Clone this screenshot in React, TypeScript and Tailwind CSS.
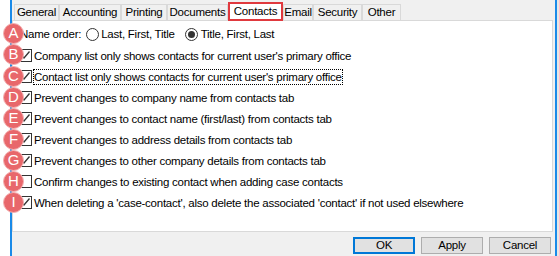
import React from "react";

const tabs = [
  { label: "General", w: "w-[45px]" },
  { label: "Accounting", w: "w-[62px]" },
  { label: "Printing", w: "w-[46px]" },
  { label: "Documents", w: "w-[61px]" },
  { label: "Contacts", w: "w-[55px]", active: true },
  { label: "Email", w: "w-[30px]" },
  { label: "Security", w: "w-[49px]" },
  { label: "Other", w: "w-[39px]" },
];

const options = [
  { text: "Company list only shows contacts for current user's primary office", checked: true },
  { text: "Contact list only shows contacts for current user's primary office", checked: true, focus: true },
  { text: "Prevent changes to company name from contacts tab", checked: true },
  { text: "Prevent changes to contact name (first/last) from contacts tab", checked: true },
  { text: "Prevent changes to address details from contacts tab", checked: true },
  { text: "Prevent changes to other company details from contacts tab", checked: true },
  { text: "Confirm changes to existing contact when adding case contacts", checked: false },
  { text: "When deleting a 'case-contact', also delete the associated 'contact' if not used elsewhere", checked: true },
];

const markers = [
  { letter: "A", top: "top-[23px]" },
  { letter: "B", top: "top-[44px]" },
  { letter: "C", top: "top-[66px]" },
  { letter: "D", top: "top-[87px]" },
  { letter: "E", top: "top-[108px]" },
  { letter: "F", top: "top-[129px]" },
  { letter: "G", top: "top-[150px]" },
  { letter: "H", top: "top-[171px]" },
  { letter: "I", top: "top-[192px]" },
];

function Checkbox({ checked }: { checked: boolean }) {
  return (
    <span className="w-[13px] h-[13px] shrink-0 border border-[#333333] bg-white flex items-center justify-center">
      {checked && (
        <svg width="11" height="11" viewBox="0 0 11 11">
          <path d="M1.5 5.5 L4 8 L9.5 1.5" fill="none" stroke="#333333" strokeWidth="1.3" />
        </svg>
      )}
    </span>
  );
}

function Radio({ checked }: { checked: boolean }) {
  return (
    <span className="w-[13px] h-[13px] shrink-0 rounded-full border border-[#333333] bg-white flex items-center justify-center">
      {checked && <span className="w-[7px] h-[7px] rounded-full bg-[#333333]" />}
    </span>
  );
}

export default function App() {
  return (
    <div className="relative w-[559px] h-[256px] flex bg-white overflow-hidden font-['Liberation_Sans',Arial,sans-serif] text-[11.5px] tracking-[-0.25px] text-black">
      <div className="w-[10px] bg-white" />
      <div className="w-[2px] bg-[#1a8ae8]" />

      {/* Dialog body */}
      <div className="w-[543px] bg-[#f0f0f0] flex flex-col">
        {/* Tabs */}
        <div className="h-[20px] pl-[2px] flex items-end">
          {tabs.map((t) =>
            t.active ? (
              <div
                key={t.label}
                className={`${t.w} h-[19px] -mb-[1px] relative z-10 bg-white border-2 border-[#e0393e] flex items-center justify-center`}
              >
                {t.label}
              </div>
            ) : (
              <div
                key={t.label}
                className={`${t.w} h-[16px] bg-[#f0f0f0] border border-b-0 border-[#d9d9d9] flex items-center justify-center`}
              >
                {t.label}
              </div>
            )
          )}
        </div>

        {/* Pane */}
        <div className="w-[541px] h-[212px] bg-white border border-[#d9d9d9] pt-[3px] flex flex-col">
          <div className="h-[21px] flex items-center pl-[7px]">
            <span>Name order:</span>
            <span className="ml-[5px] flex items-center gap-[2px]">
              <Radio checked={false} />
              <span>Last, First, Title</span>
            </span>
            <span className="ml-[10px] flex items-center gap-[3px]">
              <Radio checked={true} />
              <span>Title, First, Last</span>
            </span>
          </div>
          {options.map((o) => (
            <div key={o.text} className="h-[21px] flex items-center pl-[6px] gap-[1px]">
              <Checkbox checked={o.checked} />
              <span
                className={
                  o.focus
                    ? "border border-dotted border-black leading-[14px]"
                    : "border border-transparent leading-[14px]"
                }
              >
                {o.text}
              </span>
            </div>
          ))}
        </div>

        {/* Buttons */}
        <div className="flex justify-end gap-[6px] pr-[4px] pt-[5px]">
          <button className="w-[62px] h-[17px] bg-[#e1e1e1] border-2 border-[#0078d7] flex items-center justify-center">
            OK
          </button>
          <button className="w-[62px] h-[17px] bg-[#e1e1e1] border border-[#adadad] flex items-center justify-center">
            Apply
          </button>
          <button className="w-[62px] h-[17px] bg-[#e1e1e1] border border-[#adadad] flex items-center justify-center">
            Cancel
          </button>
        </div>
      </div>

      <div className="w-[2px] bg-[#1a8ae8]" />
      <div className="w-[2px] bg-[#e6e6e6]" />

      {/* Annotation markers */}
      {markers.map((m) => (
        <div
          key={m.letter}
          className={`absolute left-[3px] ${m.top} w-[21px] h-[21px] rounded-full bg-[#e8676b] border border-[#f3b0b1] text-white text-[15px] tracking-normal flex items-center justify-center`}
        >
          {m.letter}
        </div>
      ))}
    </div>
  );
}
